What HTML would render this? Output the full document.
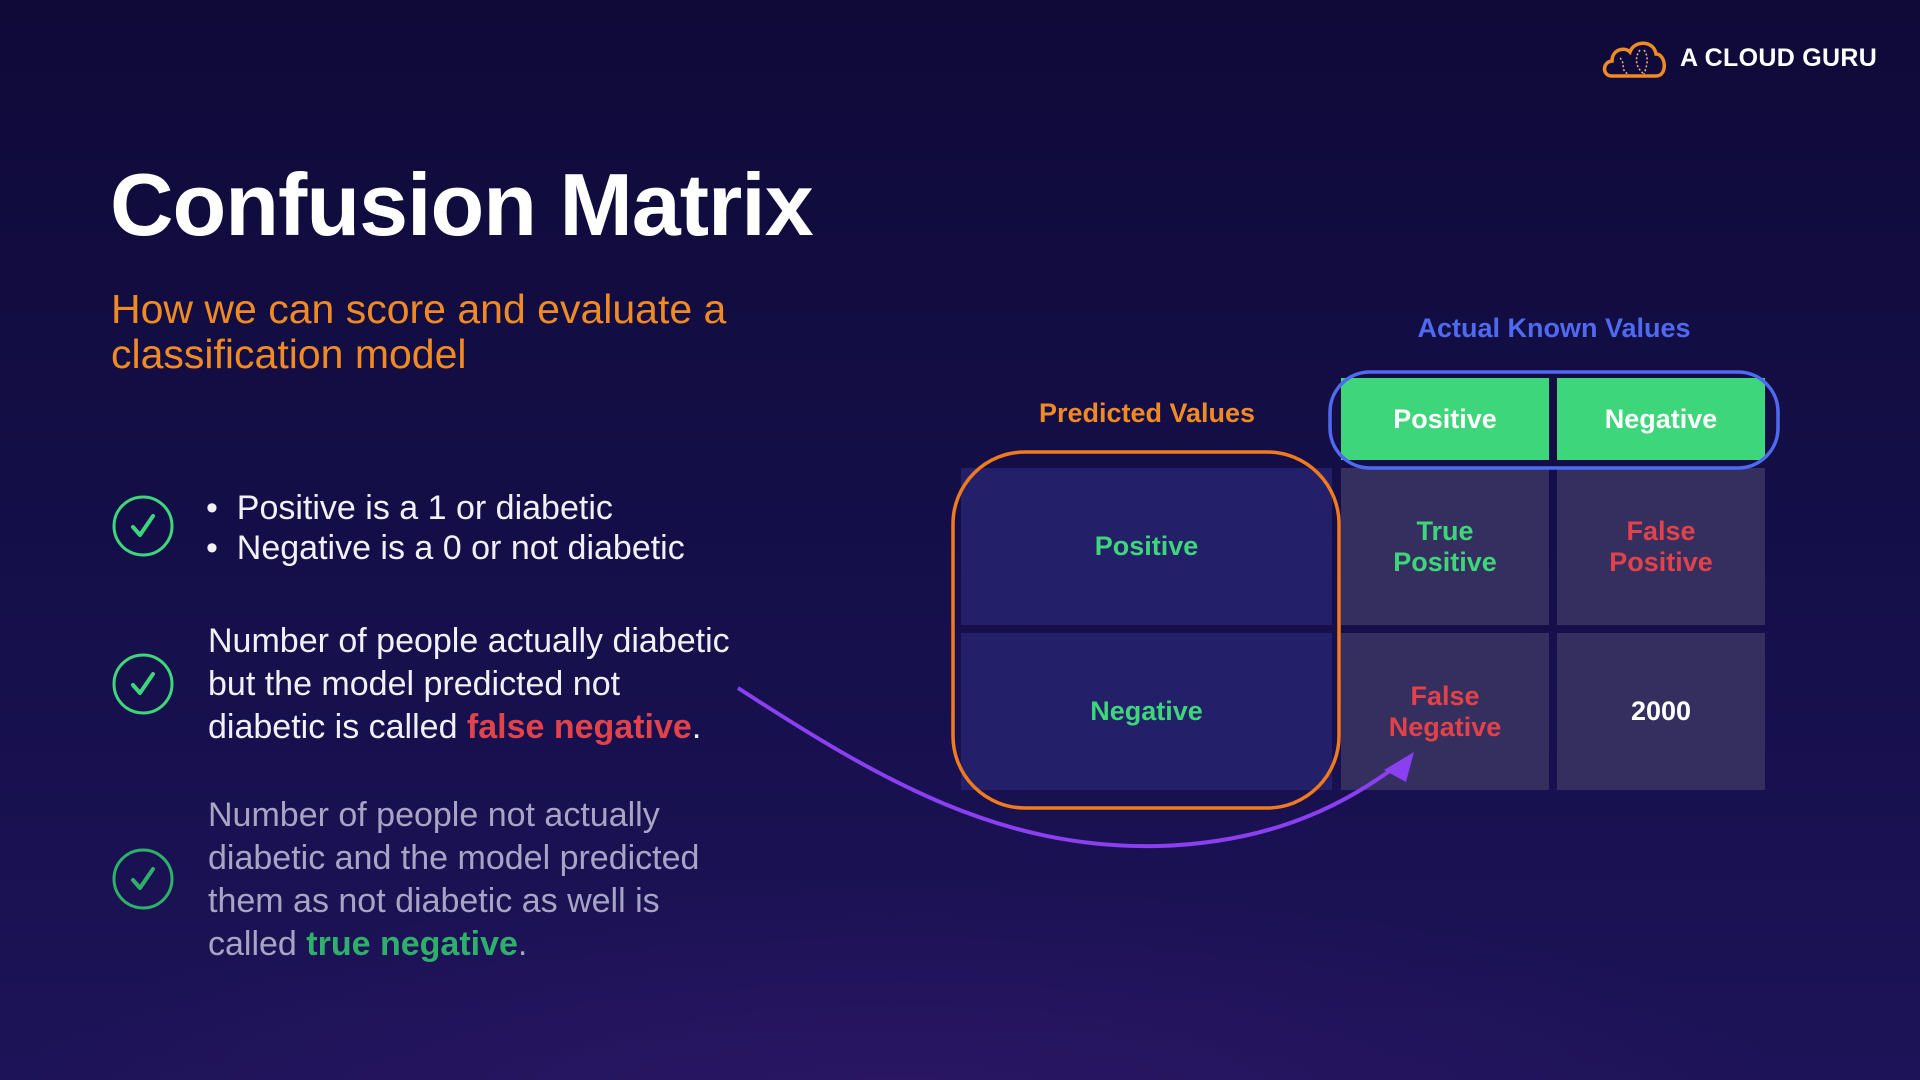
<!DOCTYPE html>
<html><head><meta charset="utf-8"><style>
*{margin:0;padding:0;box-sizing:border-box}
body{width:1920px;height:1080px;overflow:hidden;font-family:"Liberation Sans",sans-serif;
background:radial-gradient(ellipse 900px 250px at 900px 1120px,#2c1665 0%,rgba(40,20,90,0) 100%),linear-gradient(180deg,#0f0a38 0%,#150f4a 55%,#1d1358 100%);position:relative;color:#fff}
.a{position:absolute;white-space:nowrap}
.cell{position:absolute;display:flex;align-items:center;justify-content:center;text-align:center;font-weight:bold;font-size:27px;line-height:31px}
.l{background:#231f68}
.r{background:#352f5f}
.g{background:#3ed67a;color:#fff}
.body{font-size:34px;line-height:43px;color:#f2f0f7}
</style></head><body>
<svg class="a" style="left:1600px;top:36px" width="70" height="44" viewBox="0 0 70 44">
<path d="M12 40 C2 40 2 26 12 25 C12 14 24 10 30 16 C34 4 54 4 56 18 C66 18 68 40 56 40 Z" fill="none" stroke="#f08a24" stroke-width="3.5"/>
<path d="M20 22 C26 28 20 34 28 38 M40 14 C34 22 36 32 44 38 M44 14 C50 22 46 32 44 38" fill="none" stroke="#e8b080" stroke-width="1.5" stroke-dasharray="2 2"/>
</svg>
<div class="a" style="left:1680px;top:44px;font-size:25px;font-weight:bold;letter-spacing:0.3px">A CLOUD GURU</div>

<div class="a" style="left:110px;top:152px;font-size:88px;font-weight:bold;letter-spacing:-1px;line-height:106px">Confusion Matrix</div>
<div class="a" style="left:111px;top:287px;font-size:41px;line-height:45px;color:#f08a24">How we can score and evaluate a<br>classification model</div>

<svg class="a" style="left:112px;top:494px" width="64" height="64"><circle cx="31" cy="32" r="29" fill="none" stroke="#3ed67a" stroke-width="3"/><path d="M21 33 L28 41 L41 22" fill="none" stroke="#3ed67a" stroke-width="4" stroke-linecap="round" stroke-linejoin="round"/></svg>
<svg class="a" style="left:112px;top:652px" width="64" height="64"><circle cx="31" cy="32" r="29" fill="none" stroke="#3ed67a" stroke-width="3"/><path d="M21 33 L28 41 L41 22" fill="none" stroke="#3ed67a" stroke-width="4" stroke-linecap="round" stroke-linejoin="round"/></svg>
<svg class="a" style="left:112px;top:847px" width="64" height="64"><circle cx="31" cy="32" r="29" fill="none" stroke="#2fb06a" stroke-width="3"/><path d="M21 33 L28 41 L41 22" fill="none" stroke="#2fb06a" stroke-width="4" stroke-linecap="round" stroke-linejoin="round"/></svg>

<div class="a body" style="left:206px;top:488px;line-height:40px">•&nbsp; Positive is a 1 or diabetic<br>•&nbsp; Negative is a 0 or not diabetic</div>
<div class="a body" style="left:208px;top:620px">Number of people actually diabetic<br>but the model predicted not<br>diabetic is called <b style="color:#e2424a">false negative</b>.</div>
<div class="a body" style="left:208px;top:794px;color:#a8a4c4">Number of people not actually<br>diabetic and the model predicted<br>them as not diabetic as well is<br>called <b style="color:#2fb06a">true negative</b>.</div>

<div class="a" style="left:1390px;top:313px;width:328px;text-align:center;font-size:27px;font-weight:bold;color:#4f6af0">Actual Known Values</div>
<div class="a" style="left:990px;top:398px;width:314px;text-align:center;font-size:27px;font-weight:bold;color:#f08a24">Predicted Values</div>

<div class="cell g" style="left:1341px;top:378px;width:208px;height:82px">Positive</div>
<div class="cell g" style="left:1557px;top:378px;width:208px;height:82px">Negative</div>
<div class="cell l" style="left:961px;top:468px;width:371px;height:157px;color:#3ed67a">Positive</div>
<div class="cell l" style="left:961px;top:633px;width:371px;height:157px;color:#3ed67a">Negative</div>
<div class="cell r" style="left:1341px;top:468px;width:208px;height:157px;color:#3ed67a">True<br>Positive</div>
<div class="cell r" style="left:1557px;top:468px;width:208px;height:157px;color:#e2424a">False<br>Positive</div>
<div class="cell r" style="left:1341px;top:633px;width:208px;height:157px;color:#e2424a">False<br>Negative</div>
<div class="cell r" style="left:1557px;top:633px;width:208px;height:157px;color:#fff">2000</div>

<svg class="a" style="left:0;top:0" width="1920" height="1080">
<rect x="953" y="452" width="386" height="356" rx="72" fill="none" stroke="#f07a20" stroke-width="3.5"/>
<rect x="1330" y="372" width="448" height="96" rx="40" fill="none" stroke="#4f6af0" stroke-width="3.5"/>
<path d="M738 688 C880 780 1000 850 1160 846 C1280 842 1350 800 1398 765" fill="none" stroke="#8a3ff0" stroke-width="4"/>
<path d="M1384 770 L1414 752 L1406 782 Z" fill="#8a3ff0"/>
</svg>
</body></html>
